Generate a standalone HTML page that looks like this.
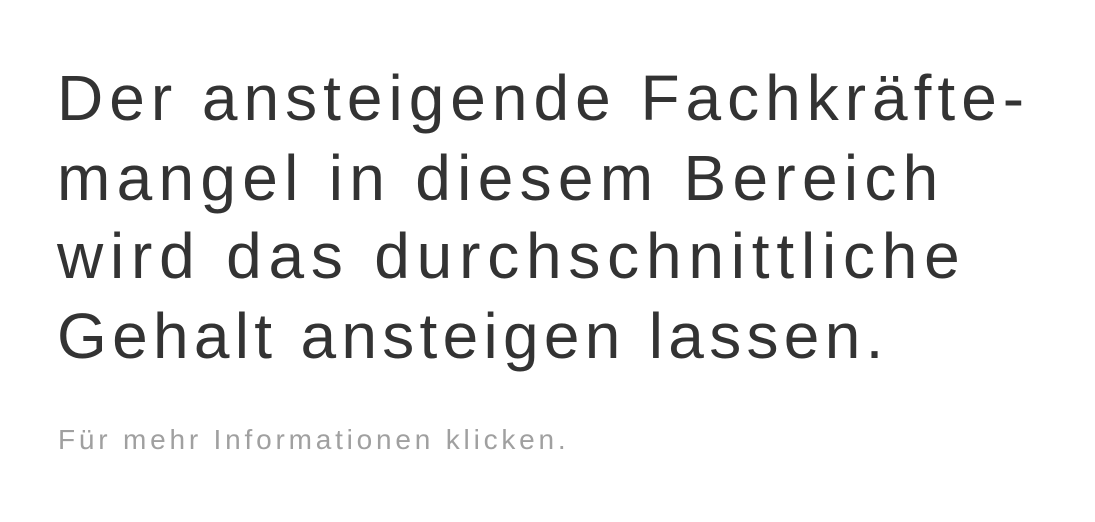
<!DOCTYPE html>
<html><head><meta charset="utf-8"><style>
html,body{margin:0;padding:0;background:#fff;width:1095px;height:522px;overflow:hidden}
.l{position:absolute;left:57px;font-family:"Liberation Sans",sans-serif;font-size:64px;line-height:79px;color:#333;white-space:nowrap}
.s{position:absolute;left:58px;top:423px;font-family:"Liberation Sans",sans-serif;font-size:28px;line-height:34px;letter-spacing:3.8px;color:#a0a0a0;white-space:nowrap}
</style></head><body>
<div class="l" style="top:59px;letter-spacing:6px">Der ansteigende Fachkräfte-</div>
<div class="l" style="top:139px;letter-spacing:6.3px">mangel in diesem Bereich</div>
<div class="l" style="top:217px;letter-spacing:6.8px">wird das durchschnittliche</div>
<div class="l" style="top:297px;letter-spacing:5.3px">Gehalt ansteigen lassen.</div>
<div class="s">Für mehr Informationen klicken.</div>
</body></html>
